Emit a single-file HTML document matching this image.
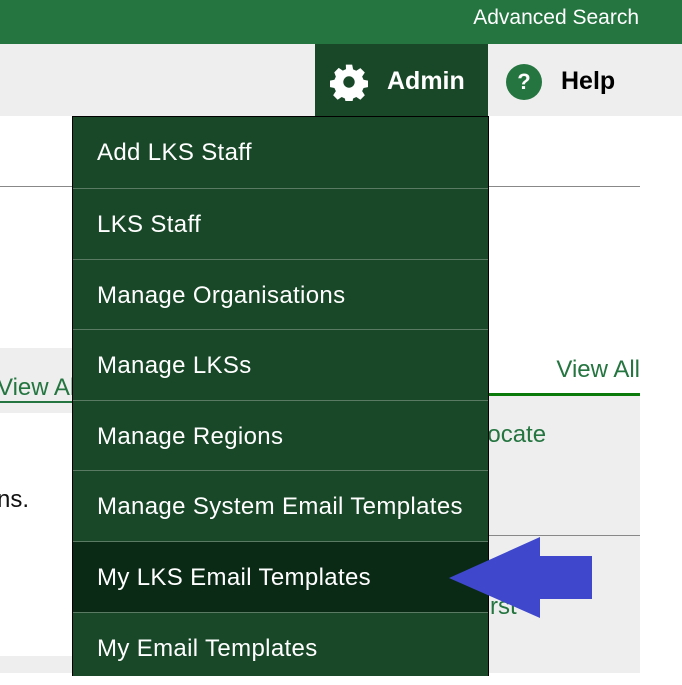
<!DOCTYPE html>
<html><head><meta charset="utf-8"><style>
*{margin:0;padding:0;box-sizing:border-box}
body{width:682px;height:673px;overflow:hidden;position:relative;background:#fff;font-family:"Liberation Sans",sans-serif}
.abs{position:absolute}
.top{left:0;top:0;width:682px;height:44px;background:#247540}
.top span{position:absolute;right:43px;top:6px;color:#fff;font-size:21px}
.nav{left:0;top:44px;width:682px;height:72px;background:#eeeeee}
.admin{left:315px;top:44px;width:173px;height:73px;background:#184828}
.dd{left:72px;top:116px;width:417px;height:560px;background:#184828;border:1px solid #000;border-bottom:none}
.it{position:absolute;left:0;width:415px;height:71px;border-top:1px solid #5b7a63;color:#fff;font-size:24px;letter-spacing:0.35px;padding-left:24px;line-height:72px;white-space:nowrap}
</style></head><body>
<div class="abs top"><span>Advanced Search</span></div>
<div class="abs nav"></div>
<div class="abs admin"></div>
<svg class="abs" style="left:330px;top:63px" width="38" height="38" viewBox="0 0 24 24"><path fill="#fff" d="M10 1h4l.6 3 2 .9 2.6-1.7 2.8 2.8-1.7 2.6.9 2 3 .6v4l-3 .6-.9 2 1.7 2.6-2.8 2.8-2.6-1.7-2 .9-.6 3h-4l-.6-3-2-.9-2.6 1.7-2.8-2.8 1.7-2.6-.9-2-3-.6v-4l3-.6.9-2L2.7 5.9 5.5 3.1 8.1 4.8l2-.9z"/><circle cx="12" cy="12" r="3.6" fill="#184828"/></svg>
<div class="abs" style="left:387px;top:67px;color:#fff;font-weight:bold;font-size:25px">Admin</div>
<div class="abs" style="left:506px;top:64px;width:36px;height:36px;border-radius:50%;background:#247540;color:#fff;font-weight:bold;font-size:22px;text-align:center;line-height:36px">?</div>
<div class="abs" style="left:561px;top:67px;color:#000;font-weight:bold;font-size:25px">Help</div>
<div class="abs" style="left:0;top:186px;width:640px;height:1px;background:#888"></div>
<div class="abs" style="left:0;top:348px;width:72px;height:65px;background:#eee"></div>
<div class="abs" style="left:-3px;top:375px;color:#247540;font-size:24px;border-bottom:2px solid #247540;line-height:26px">View All</div>
<div class="abs" style="left:-3px;top:486px;color:#111;font-size:24px">ns.</div>
<div class="abs" style="left:0;top:656px;width:72px;height:17px;background:#eee"></div>
<div class="abs" style="left:488px;top:393px;width:152px;height:3px;background:#0a7a0a"></div>
<div class="abs" style="left:488px;top:396px;width:152px;height:277px;background:#eee"></div>
<div class="abs" style="left:488px;top:535px;width:152px;height:1px;background:#888"></div>
<div class="abs" style="left:460px;top:356px;width:180px;text-align:right;color:#247540;font-size:24px">View All</div>
<div class="abs" style="left:474px;top:421px;color:#247540;font-size:24px">Locate</div>
<div class="abs" style="left:470px;top:562px;color:#247540;font-size:24px;line-height:30px">Admin<br>First</div>
<div class="abs dd">
<div class="it" style="top:0;border-top:none">Add LKS Staff</div>
<div class="it" style="top:71px">LKS Staff</div>
<div class="it" style="top:142px">Manage Organisations</div>
<div class="it" style="top:212px">Manage LKSs</div>
<div class="it" style="top:283px">Manage Regions</div>
<div class="it" style="top:353px">Manage System Email Templates</div>
<div class="it" style="top:424px;background:#0a2a16">My LKS Email Templates</div>
<div class="it" style="top:495px">My Email Templates</div>
</div>
<svg class="abs" style="left:0;top:0" width="682" height="673"><polygon fill="#3f48cc" points="449,578 540,537 540,556 592,556 592,599 540,599 540,618"/></svg>
</body></html>
